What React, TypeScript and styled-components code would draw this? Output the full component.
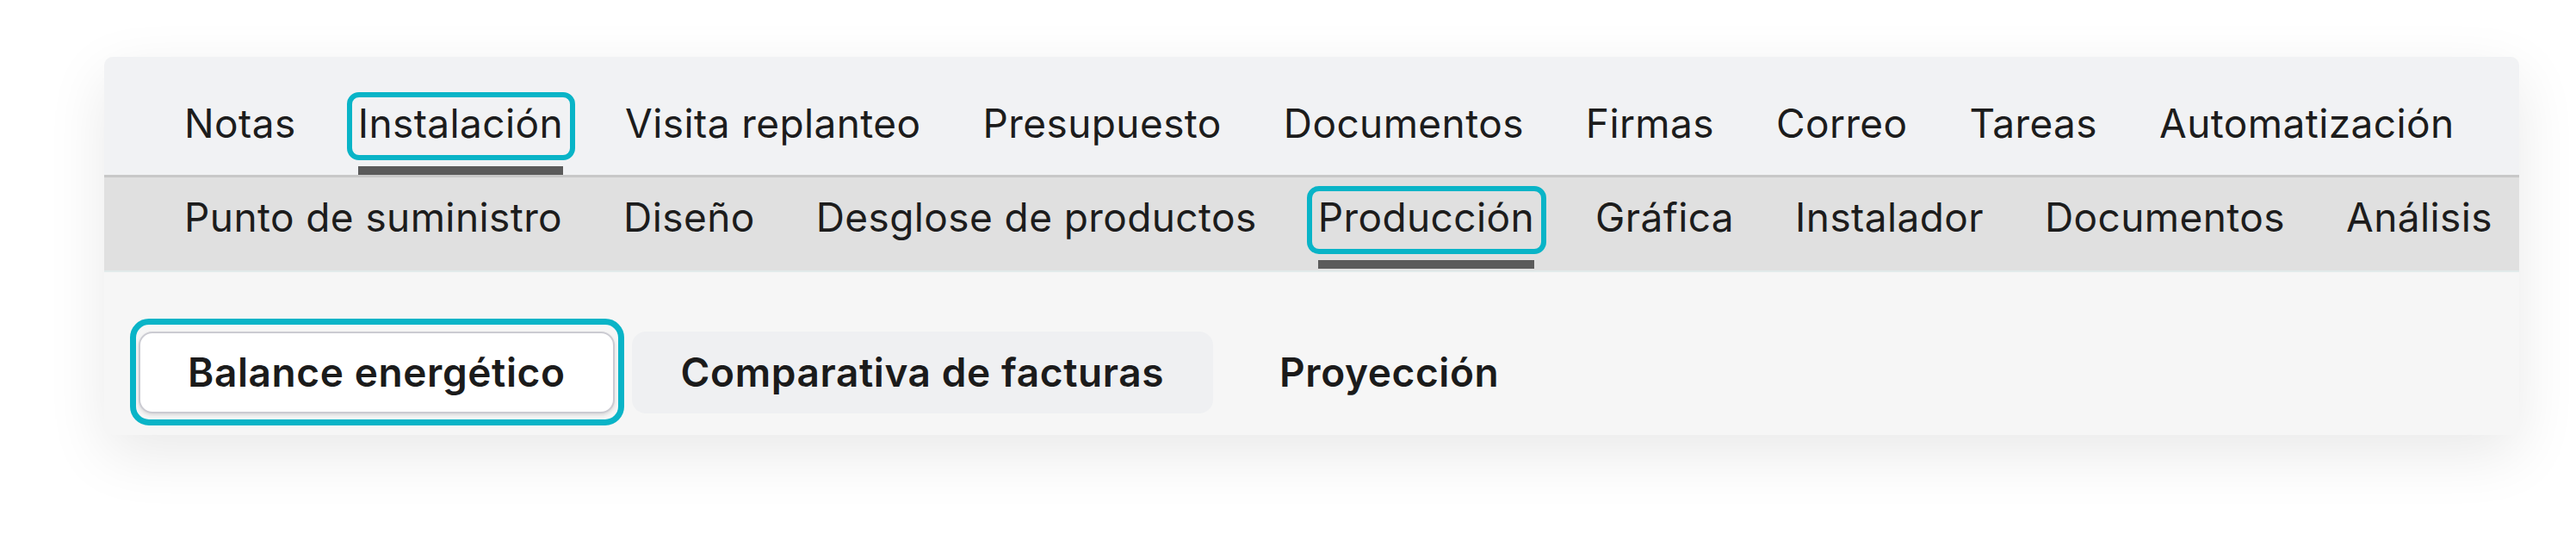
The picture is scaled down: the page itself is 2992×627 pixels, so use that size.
import React from 'react'
import styled, { createGlobalStyle } from 'styled-components'

const GlobalStyle = createGlobalStyle`
  body {
    margin: 0;
    background: #ffffff;
    font-family: Inter, 'Noto Sans', sans-serif;
    color: #1e1e1e;
  }
`

const Page = styled.div`
  display: flex;
  align-items: flex-start;
  box-sizing: border-box;
  min-height: 100vh;
  padding: 66px 0 0 121px;
`

const Card = styled.div`
  width: 2805px;
  border-radius: 10px;
  overflow: hidden;
  background: #f6f6f6;
  box-shadow: 0 22px 70px rgba(0, 0, 0, .09);
`

const TabRow = styled.nav<{ $level: 1 | 2 }>`
  display: flex;
  gap: ${({ $level }) => ($level === 1 ? '72px' : '71px')};
  padding: ${({ $level }) => ($level === 1 ? '43px 0 0 93px' : '12px 0 2px 93px')};
  background: ${({ $level }) => ($level === 1 ? '#f1f2f4' : '#e0e0e0')};
  border-bottom: ${({ $level }) => ($level === 1 ? '3px solid #c8c8c8' : '2px solid #e2ebeb')};
  white-space: nowrap;
  overflow: hidden;
`

const Tab = styled.div`
  display: flex;
  flex-direction: column;
  flex: none;
`

const Label = styled.span<{ $marked?: boolean }>`
  position: relative;
  font-size: 46px;
  line-height: 69px;
  letter-spacing: .4px;
  color: #1c1c1c;

  ${({ $marked }) => $marked && `
    &::after {
      content: '';
      position: absolute;
      inset: -2px -14px -8px -13px;
      border: 6px solid #09b4c7;
      border-radius: 14px;
    }
  `}
`

const Bar = styled.div<{ $active?: boolean }>`
  height: 10px;
  margin-top: 15px;
  background: ${({ $active }) => ($active ? '#5b5b5b' : 'transparent')};
`

const Content = styled.div`
  display: flex;
  gap: 20px;
  padding: 69px 40px 25px;
`

const Segment = styled.button<{ $variant: 'selected' | 'muted' | 'plain'; $marked?: boolean }>`
  position: relative;
  padding: 11px 55px;
  border-radius: 16px;
  font-family: inherit;
  font-size: 46px;
  line-height: 69px;
  font-weight: 600;
  letter-spacing: .6px;
  color: #1b1b1b;
  cursor: pointer;
  border: 2px solid ${({ $variant }) => ($variant === 'selected' ? '#cbcbd2' : 'transparent')};
  background: ${({ $variant }) => ({ selected: '#ffffff', muted: '#eff0f2', plain: 'transparent' }[$variant])};
  box-shadow: ${({ $variant }) => ($variant === 'selected' ? '0 2px 4px rgba(0, 0, 0, .12)' : 'none')};

  ${({ $marked }) => $marked && `
    &::after {
      content: '';
      position: absolute;
      inset: -17px -13px -16px -12px;
      border: 7px solid #09b4c7;
      border-radius: 22px;
    }
  `}
`

const mainTabs = ['Notas', 'Instalación', 'Visita replanteo', 'Presupuesto', 'Documentos', 'Firmas', 'Correo', 'Tareas', 'Automatización']
const subTabs = ['Punto de suministro', 'Diseño', 'Desglose de productos', 'Producción', 'Gráfica', 'Instalador', 'Documentos', 'Análisis']

const TabBar = ({ items, active, level }: { items: string[]; active: string; level: 1 | 2 }) => (
  <TabRow $level={level}>
    {items.map((item) => (
      <Tab key={item}>
        <Label $marked={item === active}>{item}</Label>
        <Bar $active={item === active} />
      </Tab>
    ))}
  </TabRow>
)

const App = () => (
  <>
    <GlobalStyle />
    <Page>
      <Card>
        <TabBar items={mainTabs} active="Instalación" level={1} />
        <TabBar items={subTabs} active="Producción" level={2} />
        <Content>
          <Segment $variant="selected" $marked>Balance energético</Segment>
          <Segment $variant="muted">Comparativa de facturas</Segment>
          <Segment $variant="plain">Proyección</Segment>
        </Content>
      </Card>
    </Page>
  </>
)

export default App
